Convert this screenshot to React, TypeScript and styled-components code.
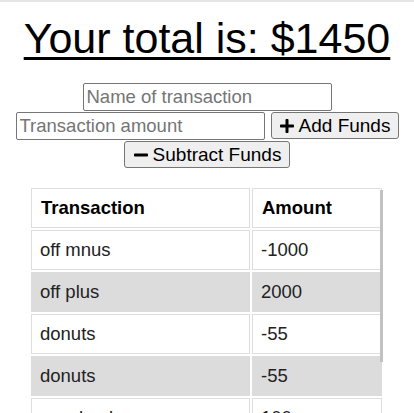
import styled, { createGlobalStyle } from 'styled-components';
import { FaPlus, FaMinus } from 'react-icons/fa';

const GlobalStyle = createGlobalStyle`
  html {
    border-top: 2px solid #e6e6e6;
  }
  body {
    margin: 8px 8px 0;
    font-family: 'Liberation Sans', Arial, sans-serif;
    color: #000;
    background: #fff;
    overflow: hidden;
  }
`;

const transactions = [
  { name: 'off mnus', amount: -1000 },
  { name: 'off plus', amount: 2000 },
  { name: 'donuts', amount: -55 },
  { name: 'donuts', amount: -55 },
  { name: 'paycheck', amount: 100 },
  { name: 'rent', amount: -500 },
];

const Title = styled.h1`
  margin: 4px 0 20px;
  text-align: center;
  font-size: 43px;
  font-weight: 400;
  text-decoration: underline;
  text-decoration-thickness: 3px;
  text-underline-offset: 4px;
`;

const Form = styled.div`
  display: flex;
  flex-wrap: wrap;
  justify-content: center;
  column-gap: 6px;
  row-gap: 1px;
`;

const Input = styled.input`
  box-sizing: border-box;
  width: 249px;
  height: 28px;
  padding: 1px 3px;
  font-family: 'Liberation Sans', Arial, sans-serif;
  font-size: 18.5px;
  border: 1px solid #767676;
  border-radius: 2px;
  &::placeholder {
    color: #757575;
  }
`;

const Button = styled.button<{ width: number }>`
  box-sizing: border-box;
  display: inline-flex;
  align-items: center;
  justify-content: center;
  gap: 4px;
  width: ${(p) => p.width}px;
  height: 27px;
  padding: 0 4px;
  font-family: 'Liberation Sans', Arial, sans-serif;
  font-size: 19px;
  color: #000;
  background: #efefef;
  border: 1px solid #767676;
  border-radius: 3px;
`;

const TableWrap = styled.div`
  position: relative;
  margin: 19px 21px 0 22px;
  height: 226px;
  overflow: hidden;
`;

const Thumb = styled.div`
  position: absolute;
  top: 3px;
  right: 2px;
  width: 3px;
  height: 172px;
  background: #c1c1c1;
`;

const Table = styled.table`
  width: 100%;
  border-spacing: 2px;
  margin: -1px 0 0 -1px;
`;

const Row = styled.tr<{ striped: boolean }>`
  background: ${(p) => (p.striped ? '#dcdcdc' : '#fff')};
`;

const Head = styled.th`
  height: 40px;
  box-sizing: border-box;
  padding: 0 9px;
  text-align: left;
  font-size: 18.5px;
  font-weight: 700;
  border: 1px solid #dedede;
  &:first-child {
    width: 219px;
  }
`;

const Cell = styled.td<{ striped: boolean }>`
  height: 40px;
  box-sizing: border-box;
  padding: 0 8px;
  font-size: 18.5px;
  color: #222;
  border: 1px solid ${(p) => (p.striped ? '#dcdcdc' : '#dedede')};
`;

export default function App() {
  return (
    <>
      <GlobalStyle />
      <Title>Your total is: $1450</Title>
      <Form>
        <Input placeholder="Name of transaction" />
        <Input placeholder="Transaction amount" />
        <Button width={128}>
          <FaPlus size={16} />
          Add Funds
        </Button>
        <Button width={166}>
          <FaMinus size={16} />
          Subtract Funds
        </Button>
      </Form>
      <TableWrap>
        <Table>
          <thead>
            <tr>
              <Head>Transaction</Head>
              <Head>Amount</Head>
            </tr>
          </thead>
          <tbody>
            {transactions.map((t, i) => (
              <Row key={i} striped={i % 2 === 1}>
                <Cell striped={i % 2 === 1}>{t.name}</Cell>
                <Cell striped={i % 2 === 1}>{t.amount}</Cell>
              </Row>
            ))}
          </tbody>
        </Table>
        <Thumb />
      </TableWrap>
    </>
  );
}
